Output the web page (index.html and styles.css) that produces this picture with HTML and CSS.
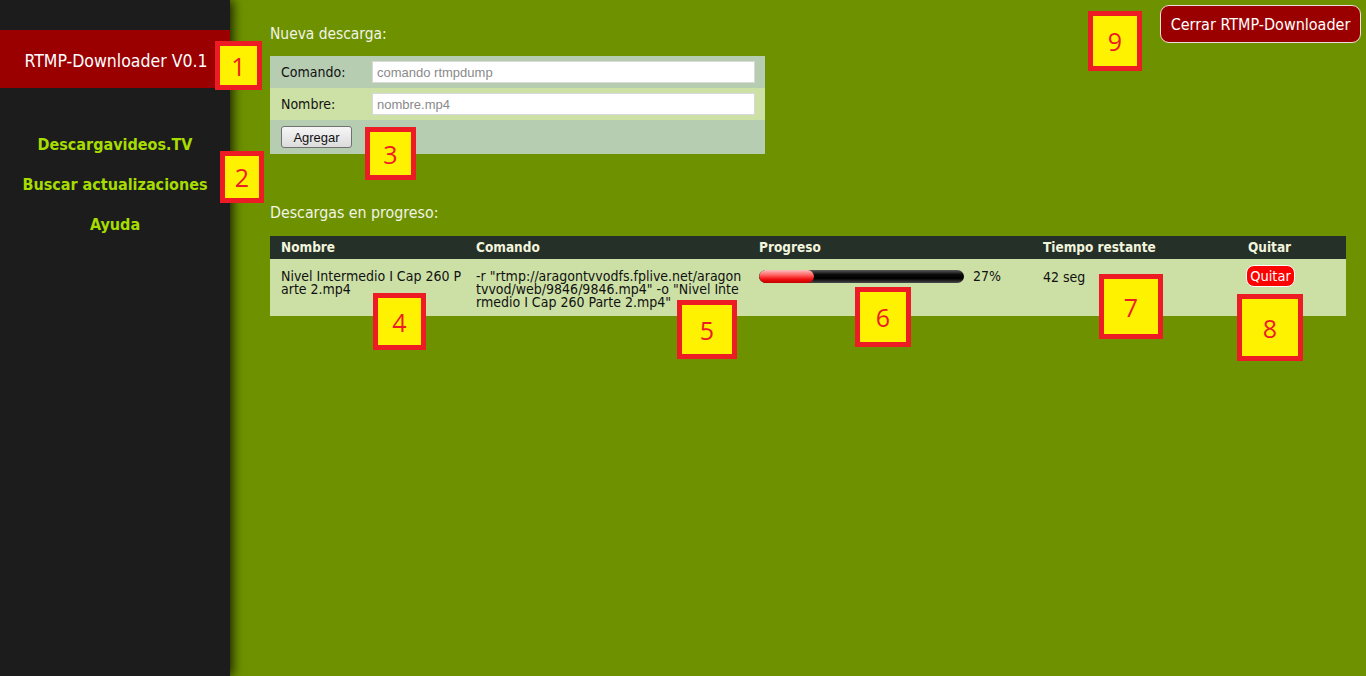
FILE: index.html
```html
<!DOCTYPE html>
<html lang="es">
<head>
<meta charset="utf-8">
<title>RTMP-Downloader</title>
<link rel="stylesheet" href="styles.css">
</head>
<body>
<div class="layout">
  <aside class="sidebar">
    <div class="brand">RTMP-Downloader V0.1</div>
    <nav class="nav">
      <a href="#">Descargavideos.TV</a>
      <a href="#">Buscar actualizaciones</a>
      <a href="#">Ayuda</a>
    </nav>
  </aside>
  <main class="main">
    <div class="top">
      <section class="new">
        <h2 class="heading">Nueva descarga:</h2>
        <table class="form">
          <tr class="r1"><td class="lbl">Comando:</td><td><input class="inp" type="text" placeholder="comando rtmpdump"></td></tr>
          <tr class="r2"><td class="lbl">Nombre:</td><td><input class="inp" type="text" placeholder="nombre.mp4"></td></tr>
          <tr class="r3"><td colspan="2"><button class="add">Agregar</button></td></tr>
        </table>
      </section>
      <button class="close">Cerrar RTMP-Downloader</button>
    </div>
    <h2 class="heading h2">Descargas en progreso:</h2>
    <table class="list">
      <colgroup>
        <col class="c1"><col class="c2"><col class="c3"><col class="c4"><col class="c5">
      </colgroup>
      <thead>
        <tr><th>Nombre</th><th>Comando</th><th>Progreso</th><th>Tiempo restante</th><th class="ctr">Quitar</th></tr>
      </thead>
      <tbody>
        <tr>
          <td class="brk name">Nivel Intermedio I Cap 260 Parte 2.mp4</td>
          <td class="brk">-r "rtmp://aragontvvodfs.fplive.net/aragontvvod/web/9846/9846.mp4" -o "Nivel Intermedio I Cap 260 Parte 2.mp4"</td>
          <td><div class="prog"><div class="bar"><div class="fill" style="width:27%"></div></div><span class="pct">27%</span></div></td>
          <td><span class="time">42 seg</span></td>
          <td class="ctr"><button class="quit">Quitar</button></td>
        </tr>
      </tbody>
    </table>
  </main>
</div>
<div class="badge b1">1</div>
<div class="badge b2">2</div>
<div class="badge b3">3</div>
<div class="badge b4">4</div>
<div class="badge b5">5</div>
<div class="badge b6">6</div>
<div class="badge b7">7</div>
<div class="badge b8">8</div>
<div class="badge b9">9</div>
</body>
</html>
```

FILE: styles.css
```css
html, body {
  margin: 0;
  padding: 0;
  height: 100%;
}
body {
  background: #6e9100;
  font-family: "DejaVu Sans Condensed", "DejaVu Sans", sans-serif;
  overflow: hidden;
  position: relative;
}
.layout {
  display: flex;
  height: 676px;
}
.sidebar {
  width: 230px;
  flex: none;
  background: #1c1c1c;
  padding-top: 30px;
  box-shadow: 3px 0 10px rgba(0, 0, 0, 0.75);
  position: relative;
  z-index: 1;
}
.brand {
  height: 58px;
  box-sizing: border-box;
  padding: 3px 0 0 2px;
  background: #9b0000;
  color: #fff;
  font-size: 17.5px;
  display: flex;
  align-items: center;
  justify-content: center;
}
.nav {
  display: flex;
  flex-direction: column;
  align-items: center;
  padding-top: 37px;
}
.nav a {
  color: #a6dc00;
  font-weight: bold;
  font-size: 16px;
  line-height: 40px;
  text-decoration: none;
}
.main {
  flex: 1;
  min-width: 0;
  padding: 0 20px 0 40px;
}
.top {
  display: flex;
  justify-content: space-between;
  align-items: flex-start;
}
.heading {
  margin: 0;
  font-weight: normal;
  font-size: 15.4px;
  color: #f2f4e6;
  line-height: 18px;
  padding-top: 25px;
  height: 31px;
  box-sizing: content-box;
}
.h2 {
  padding-top: 204px;
  margin-top: -154px;
  height: 18px;
  padding-bottom: 14px;
  font-size: 15.8px;
}
.form {
  border-collapse: collapse;
  width: 495px;
}
.form td {
  padding: 0 10px 0 11px;
  font-size: 14px;
  color: #111;
}
.form .lbl {
  width: 70px;
}
.r1 { background: #b6cdb1; height: 32px; }
.r2 { background: #cde1a6; height: 32px; }
.r3 { background: #b6cdb1; height: 34px; }
.inp {
  display: block;
  width: 383px;
  height: 22px;
  box-sizing: border-box;
  border: 1px solid #d8d8d8;
  background: #fff;
  padding: 0 4px;
  font-family: "Liberation Sans", Arial, sans-serif;
  font-size: 13px;
  color: #333;
}
.inp::placeholder {
  color: #8a8a8a;
}
.add {
  display: block;
  width: 71px;
  height: 22px;
  border: 1px solid #707070;
  border-radius: 3px;
  background: linear-gradient(#f6f6f6, #dcdcdc);
  font-family: "Liberation Sans", Arial, sans-serif;
  font-size: 13px;
  color: #111;
  padding: 0;
}
.close {
  flex: none;
  margin-top: 5px;
  margin-right: -15px;
  width: 201px;
  height: 38px;
  padding: 0;
  background: #9b0000;
  color: #fff;
  border: 1px solid #f0dede;
  border-radius: 9px;
  font-family: "DejaVu Sans Condensed", "DejaVu Sans", sans-serif;
  font-size: 16px;
  white-space: nowrap;
}
.list {
  border-collapse: collapse;
  width: 1076px;
  table-layout: fixed;
}
.list .c1 { width: 195px; }
.list .c2 { width: 283px; }
.list .c3 { width: 284px; }
.list .c4 { width: 163px; }
.list .c5 { width: 151px; }
.list th, .list td {
  box-sizing: border-box;
}
.list th {
  background: #243028;
  color: #f2f4dc;
  font-size: 13.5px;
  font-weight: bold;
  text-align: left;
  height: 23px;
  padding: 0 0 0 11px;
  line-height: 23px;
}
.list td {
  background: #cce0a6;
  color: #111;
  font-size: 14px;
  line-height: 13px;
  vertical-align: top;
  padding: 11px 5px 7px 11px;
  height: 57px;
}
.list td.name {
  padding-right: 0;
}
.list .ctr {
  text-align: center;
  padding-left: 0;
  padding-right: 2px;
}
.list td.ctr {
  padding-right: 0;
}
.brk {
  word-break: break-all;
}
.prog {
  display: flex;
  align-items: center;
  gap: 9px;
  margin-top: -1px;
}
.bar {
  flex: none;
  width: 205px;
  height: 13px;
  border-radius: 7px;
  background: linear-gradient(#5a5a5a, #0a0a0a 35%, #000 65%, #4a4a4a);
  overflow: hidden;
}
.fill {
  height: 100%;
  border-radius: 7px;
  background: linear-gradient(#ffc0c0, #ff6060 40%, #f01010 70%, #c00000);
}
.pct, .time {
  line-height: 14px;
}
.time {
  display: block;
}
.quit {
  margin-top: -5px;
  height: 22px;
  padding: 0 3px;
  background: #ff0000;
  color: #fff;
  border: 1px solid #fff;
  border-radius: 8px;
  font-family: "DejaVu Sans Condensed", "DejaVu Sans", sans-serif;
  font-size: 14.5px;
}
.badge {
  position: absolute;
  z-index: 5;
  box-sizing: border-box;
  background: #fff200;
  border: 5px solid #ed1c24;
  color: #ed1c24;
  font-family: "Open Sans", "Liberation Sans", sans-serif;
  font-size: 25px;
  display: flex;
  align-items: center;
  justify-content: center;
}
.b1 { left: 215px; top: 41px; width: 47px; height: 49px; }
.b2 { left: 220px; top: 151px; width: 44px; height: 52px; }
.b3 { left: 365px; top: 127px; width: 51px; height: 53px; }
.b4 { left: 373px; top: 293px; width: 53px; height: 57px; }
.b5 { left: 677px; top: 300px; width: 60px; height: 59px; }
.b6 { left: 855px; top: 287px; width: 56px; height: 60px; }
.b7 { left: 1099px; top: 274px; width: 64px; height: 65px; }
.b8 { left: 1237px; top: 294px; width: 66px; height: 67px; }
.b9 { left: 1088px; top: 11px; width: 54px; height: 60px; }
```
